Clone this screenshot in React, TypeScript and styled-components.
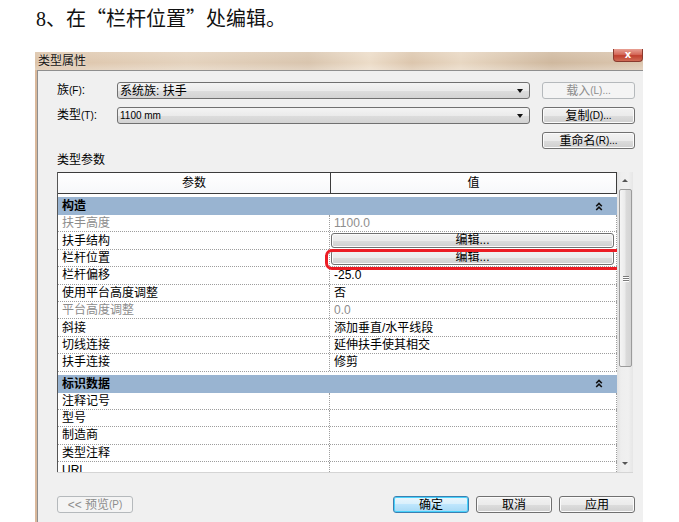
import React from 'react';
import styled, { createGlobalStyle, css } from 'styled-components';

const Global = createGlobalStyle`
  html, body { margin: 0; padding: 0; background: #fff; }
  body { font-family: "Liberation Sans", "Noto Sans CJK SC", sans-serif; color: #000; }
  * { box-sizing: border-box; }
`;

const Page = styled.div`
  width: 679px;
  height: 522px;
  overflow: hidden;
  padding: 6px 0 0 35px;
`;

const Heading = styled.h1`
  margin: 0 0 0 1px;
  height: 24px;
  font-family: "Noto Sans CJK SC", sans-serif;
  font-weight: normal;
  font-size: 20px;
  line-height: 24px;
  color: #111;
  white-space: nowrap;
`;

const Num = styled.span`
  font-family: "Liberation Serif", serif;
`;

const Dialog = styled.div`
  margin-top: 22px;
  width: 608px;
  height: 470px;
  display: flex;
  flex-direction: column;
`;

const TitleBar = styled.div`
  height: 18px;
  flex: none;
  display: flex;
  align-items: flex-start;
  justify-content: space-between;
  background:
    linear-gradient(to bottom, rgba(255,255,255,0.15), rgba(255,255,255,0) 60%, rgba(255,255,255,0.25)),
    linear-gradient(to right, #dcc3a8 0%, #e4d2bd 25%, #d9c5ae 45%, #ecdcc8 55%, #dcc6ad 62%, #e8d7c2 70%, #cfb89e 85%, #dcc7b0 100%);
`;

const TitleText = styled.span`
  font-family: "Noto Sans CJK SC", sans-serif;
  font-size: 12px;
  line-height: 14px;
  margin: 1px 0 0 3px;
  color: #141414;
  text-shadow: 0 0 3px rgba(255, 255, 255, 0.7);
`;

const CloseBtn = styled.div`
  margin-top: -3px;
  width: 30px;
  height: 13px;
  border: 1px solid #8a3a2e;
  border-top: none;
  border-radius: 0 0 4px 4px;
  background: linear-gradient(to bottom, #e8a093 0%, #d56a5a 45%, #c0402e 55%, #d06b55 100%);
  color: #fff;
  font: bold 10px/11px "DejaVu Sans", sans-serif;
  text-align: center;
`;

const Body = styled.div`
  flex: 1;
  display: flex;
  min-height: 0;
`;

const SideFrame = styled.div`
  width: 2px;
  flex: none;
  background: #d9b89b;
`;

const Content = styled.div`
  flex: 1;
  min-width: 0;
  background: #f0f0f0;
  border-left: 1px solid #8f8f8f;
  border-top: 1px solid #8f8f8f;
  padding: 11px 8px 0 19px;
  display: flex;
  flex-direction: column;
`;

const TopGrid = styled.div`
  display: grid;
  grid-template-columns: 48px 413px 93px;
  grid-auto-rows: 17px;
  column-gap: 12px;
  row-gap: 8px;
  align-items: center;
`;

const FieldLabel = styled.span`
  font-size: 12px;
  line-height: 14px;
  white-space: nowrap;
  span { font-size: 10px; }
`;

const Combo = styled.div`
  height: 17px;
  border: 1px solid #707070;
  border-radius: 3px;
  background: linear-gradient(to bottom, #f4f4f4 0%, #ebebeb 50%, #dddddd 51%, #d3d3d3 100%);
  display: flex;
  align-items: center;
  justify-content: space-between;
  padding: 0 6px 0 2px;
`;

const ComboText = styled.span<{ $small?: boolean }>`
  font-size: ${p => (p.$small ? '10px' : '12px')};
  line-height: 14px;
  white-space: nowrap;
`;

const Caret = styled.span`
  width: 0;
  height: 0;
  border-left: 3.5px solid transparent;
  border-right: 3.5px solid transparent;
  border-top: 4px solid #111;
`;

const Button = styled.div<{ $variant?: 'normal' | 'disabled' | 'default' }>`
  height: 17px;
  border-radius: 3px;
  display: flex;
  align-items: center;
  justify-content: center;
  font-size: 12px;
  line-height: 14px;
  white-space: nowrap;
  span { font-size: 10px; }
  ${p => {
    switch (p.$variant) {
      case 'disabled':
        return css`
          border: 1px solid #b5b9bc;
          background: #f4f4f4;
          color: #8c8c8c;
        `;
      case 'default':
        return css`
          border: 1px solid #3c7fb1;
          box-shadow: inset 0 0 0 1px #48d2fb;
          background: linear-gradient(to bottom, #eaf6fd 0%, #d9f0fc 45%, #bee6fd 50%, #a7d9f5 100%);
          color: #000;
        `;
      default:
        return css`
          border: 1px solid #707070;
          box-shadow: inset 0 0 0 1px #fbfbfb;
          background: linear-gradient(to bottom, #f2f2f2 0%, #ebebeb 50%, #dddddd 51%, #cfcfcf 100%);
          color: #000;
        `;
    }
  }}
`;

const SectionLabel = styled.div`
  margin-top: 4px;
  font-size: 12px;
  line-height: 14px;
`;

const TableFrame = styled.div`
  margin-top: 5px;
  width: 576px;
  height: 301px;
  flex: none;
  display: flex;
  border-bottom: 1px solid #d5d5d5;
`;

const GridArea = styled.div`
  width: 560px;
  flex: none;
  background: #fff;
  border-left: 1px solid #555;
  overflow: hidden;
  display: flex;
  flex-direction: column;
`;

const HeaderRow = styled.div`
  display: grid;
  grid-template-columns: 272px 287px;
  height: 22px;
  flex: none;
  border-top: 1px solid #3c3c3c;
  border-bottom: 1px solid #3c3c3c;
  background: linear-gradient(to bottom, #ffffff, #f7f8fa);
`;

const HeaderCell = styled.div<{ $value?: boolean }>`
  display: flex;
  align-items: center;
  justify-content: center;
  font-size: 12px;
  line-height: 14px;
  ${p => p.$value && css`
    border-left: 1px solid #3c3c3c;
    border-right: 1px solid #3c3c3c;
  `}
`;

const GroupRow = styled.div`
  margin-top: 3px;
  height: 18px;
  flex: none;
  background: #99b4d1;
  display: flex;
  align-items: center;
  justify-content: space-between;
  padding: 0 14px 0 4px;
  font-size: 12px;
  font-weight: bold;
  line-height: 14px;
`;

const DataRow = styled.div`
  display: grid;
  grid-template-columns: 272px 287px;
  height: 17.4px;
  flex: none;
  border-bottom: 1px dotted #9d9d9d;
`;

const LabelCell = styled.div<{ $muted?: boolean }>`
  display: flex;
  align-items: center;
  padding-left: 4px;
  border-right: 1px dotted #9d9d9d;
  font-size: 12px;
  line-height: 14px;
  color: ${p => (p.$muted ? '#8d8d8d' : '#000')};
  white-space: nowrap;
`;

const ValueCell = styled.div<{ $muted?: boolean; $button?: boolean }>`
  position: relative;
  display: flex;
  align-items: ${p => (p.$button ? 'flex-end' : 'center')};
  padding: ${p => (p.$button ? '0 2px 1px 1px' : '0 0 0 4px')};
  border-right: 1px dotted #9d9d9d;
  font-size: 12px;
  line-height: 14px;
  color: ${p => (p.$muted ? '#8d8d8d' : '#000')};
  white-space: nowrap;
`;

const EditButton = styled.div`
  flex: 1;
  height: 15px;
  border: 1px solid #707070;
  border-radius: 3px;
  box-shadow: inset 0 0 0 1px #fbfbfb;
  background: linear-gradient(to bottom, #f2f2f2 0%, #ebebeb 50%, #dddddd 51%, #cfcfcf 100%);
  display: flex;
  align-items: center;
  justify-content: center;
  font-size: 12px;
  line-height: 13px;
`;

const Highlight = styled.div`
  position: absolute;
  left: -5px;
  right: -7px;
  top: -1px;
  bottom: -4px;
  border: 3.5px solid #ec1c24;
  border-radius: 7px;
  z-index: 2;
  pointer-events: none;
`;

const Scrollbar = styled.div`
  width: 16px;
  flex: none;
  display: flex;
  flex-direction: column;
  background: linear-gradient(to right, #e2e2e2 0%, #eeeeee 25%, #f0f0f0 70%, #e6e6e6 100%);
`;

const ArrowBox = styled.div`
  height: 17px;
  flex: none;
  display: flex;
  align-items: center;
  justify-content: center;
`;

const Triangle = styled.span<{ $down?: boolean }>`
  width: 0;
  height: 0;
  border-left: 3px solid transparent;
  border-right: 3px solid transparent;
  ${p => (p.$down ? 'border-top: 3px solid #555;' : 'border-bottom: 3px solid #555;')}
`;

const Thumb = styled.div`
  height: 178px;
  flex: none;
  margin: 0 1px 0 2px;
  border: 1px solid #9b9b9b;
  border-radius: 2px;
  background: linear-gradient(to right, #f5f5f5 0%, #ebebeb 45%, #dadada 55%, #d4d4d4 100%);
  display: flex;
  flex-direction: column;
  align-items: center;
  justify-content: center;
  gap: 1px;
`;

const Grip = styled.span`
  width: 6px;
  height: 1px;
  background: #7a7a7a;
  box-shadow: 0 1px 0 #fff;
`;

const Track = styled.div`
  flex: 1;
`;

const Footer = styled.div`
  margin-top: 23px;
  width: 578px;
  display: flex;
  justify-content: space-between;
`;

const ButtonGroup = styled.div`
  display: flex;
  gap: 7px;
`;

const FooterButton = styled(Button)`
  width: 76px;
`;

const Chevrons = () => (
  <svg width="8" height="9" viewBox="0 0 8 9">
    <path d="M1.2 4.2 L4 1.4 L6.8 4.2" fill="none" stroke="#111" strokeWidth="1.6" />
    <path d="M1.2 8 L4 5.2 L6.8 8" fill="none" stroke="#111" strokeWidth="1.6" />
  </svg>
);

type Row = { label: string; value?: string; muted?: boolean; edit?: boolean; highlight?: boolean };

const groups: { title: string; rows: Row[] }[] = [
  {
    title: '构造',
    rows: [
      { label: '扶手高度', value: '1100.0', muted: true },
      { label: '扶手结构', edit: true },
      { label: '栏杆位置', edit: true, highlight: true },
      { label: '栏杆偏移', value: '-25.0' },
      { label: '使用平台高度调整', value: '否' },
      { label: '平台高度调整', value: '0.0', muted: true },
      { label: '斜接', value: '添加垂直/水平线段' },
      { label: '切线连接', value: '延伸扶手使其相交' },
      { label: '扶手连接', value: '修剪' },
    ],
  },
  {
    title: '标识数据',
    rows: [
      { label: '注释记号' },
      { label: '型号' },
      { label: '制造商' },
      { label: '类型注释' },
      { label: 'URL' },
    ],
  },
];

export default function App() {
  return (
    <>
      <Global />
      <Page>
        <Heading>
          <Num>8</Num>、在“栏杆位置”处编辑。
        </Heading>
        <Dialog>
          <TitleBar>
            <TitleText>类型属性</TitleText>
            <CloseBtn>x</CloseBtn>
          </TitleBar>
          <Body>
            <SideFrame />
            <Content>
              <TopGrid>
                <FieldLabel>族<span>(F)</span>:</FieldLabel>
                <Combo>
                  <ComboText>系统族: 扶手</ComboText>
                  <Caret />
                </Combo>
                <Button $variant="disabled">载入<span>(L)...</span></Button>
                <FieldLabel>类型<span>(T)</span>:</FieldLabel>
                <Combo>
                  <ComboText $small>1100 mm</ComboText>
                  <Caret />
                </Combo>
                <Button>复制<span>(D)...</span></Button>
                <span />
                <span />
                <Button>重命名<span>(R)...</span></Button>
              </TopGrid>
              <SectionLabel>类型参数</SectionLabel>
              <TableFrame>
                <GridArea>
                  <HeaderRow>
                    <HeaderCell>参数</HeaderCell>
                    <HeaderCell $value>值</HeaderCell>
                  </HeaderRow>
                  {groups.map(g => (
                    <React.Fragment key={g.title}>
                      <GroupRow>
                        <span>{g.title}</span>
                        <Chevrons />
                      </GroupRow>
                      {g.rows.map(r => (
                        <DataRow key={r.label}>
                          <LabelCell $muted={r.muted}>{r.label}</LabelCell>
                          <ValueCell $muted={r.muted} $button={r.edit}>
                            {r.edit ? <EditButton>编辑...</EditButton> : r.value}
                            {r.highlight && <Highlight />}
                          </ValueCell>
                        </DataRow>
                      ))}
                    </React.Fragment>
                  ))}
                </GridArea>
                <Scrollbar>
                  <ArrowBox><Triangle /></ArrowBox>
                  <Thumb>
                    <Grip />
                    <Grip />
                    <Grip />
                  </Thumb>
                  <Track />
                  <ArrowBox><Triangle $down /></ArrowBox>
                </Scrollbar>
              </TableFrame>
              <Footer>
                <FooterButton $variant="disabled">&lt;&lt; 预览<span>(P)</span></FooterButton>
                <ButtonGroup>
                  <FooterButton $variant="default">确定</FooterButton>
                  <FooterButton>取消</FooterButton>
                  <FooterButton>应用</FooterButton>
                </ButtonGroup>
              </Footer>
            </Content>
          </Body>
        </Dialog>
      </Page>
    </>
  );
}
